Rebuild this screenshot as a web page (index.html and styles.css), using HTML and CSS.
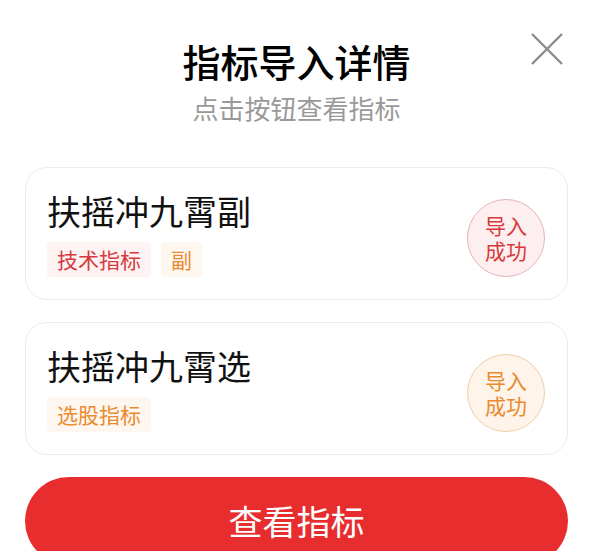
FILE: index.html
```html
<!DOCTYPE html>
<html>

<head>
    <title>指标导入详情</title>
    <link rel="stylesheet" href="styles.css">
</head>

<body>
    <div class="sheet">
        <div class="header">
            <h1 class="title">指标导入详情</h1>
            <p class="subtitle">点击按钮查看指标</p>
            <button class="close" aria-label="关闭">
                <svg width="32" height="32" viewBox="0 0 32 32">
                    <path d="M1 1 L31 31 M31 1 L1 31" stroke="#8c8c8c" stroke-width="2.4" fill="none" />
                </svg>
            </button>
        </div>

        <ul class="list">
            <li class="card">
                <div class="info">
                    <div class="name">扶摇冲九霄副</div>
                    <div class="tags">
                        <span class="tag tag-red">技术指标</span>
                        <span class="tag tag-orange">副</span>
                    </div>
                </div>
                <div class="status status-red">
                    <span>导入</span>
                    <span>成功</span>
                </div>
            </li>
            <li class="card">
                <div class="info">
                    <div class="name">扶摇冲九霄选</div>
                    <div class="tags">
                        <span class="tag tag-orange">选股指标</span>
                    </div>
                </div>
                <div class="status status-orange">
                    <span>导入</span>
                    <span>成功</span>
                </div>
            </li>
        </ul>

        <button class="view">查看指标</button>
    </div>
</body>

</html>
```

FILE: styles.css
```css
body {
    margin: 0;
    background-color: #fff;
    font-family: 'Noto Sans CJK SC', 'Noto Sans', sans-serif;
    color: #111;
}

.sheet {
    padding: 0 30px 0 25px;
}

.header {
    position: relative;
    text-align: center;
    padding-top: 38px;
}

.title {
    margin: 0;
    font-size: 38px;
    font-weight: 500;
    line-height: 46px;
    color: #000;
}

.subtitle {
    margin: 7px 0 0;
    font-size: 26px;
    line-height: 34px;
    color: #999;
}

.close {
    position: absolute;
    top: 33px;
    right: 5px;
    padding: 0;
    border: none;
    background: none;
    width: 32px;
    height: 32px;
}

.list {
    list-style: none;
    margin: 42px 0 0;
    padding: 0;
}

.card {
    display: flex;
    align-items: flex-start;
    justify-content: space-between;
    border: 1px solid #ececec;
    border-radius: 22px;
    padding: 21px 22px 22px 21px;
    margin-bottom: 22px;
}

.name {
    font-size: 34px;
    line-height: 44px;
    color: #111;
}

.tags {
    display: flex;
    gap: 10px;
    margin-top: 9px;
}

.tag {
    font-size: 21px;
    line-height: 35px;
    padding: 0 10px;
    border-radius: 4px;
}

.tag-red {
    background-color: #fdf3f3;
    color: #d63a3d;
}

.tag-orange {
    background-color: #fef7ef;
    color: #ea8a2e;
}

.status {
    width: 76px;
    height: 76px;
    border-radius: 50%;
    margin-top: 10px;
    display: flex;
    flex-direction: column;
    align-items: center;
    justify-content: center;
    font-size: 21px;
    line-height: 25px;
}

.status-red {
    background-color: #fdeeef;
    border: 1px solid #e6b3b8;
    color: #d63a3d;
}

.status-orange {
    background-color: #fef4e9;
    border: 1px solid #efcfa6;
    color: #ea8a2e;
}

.view {
    display: block;
    width: 100%;
    height: 88px;
    border: none;
    border-radius: 44px;
    background-color: #e82d2f;
    color: #fff;
    font-family: inherit;
    font-size: 34px;
    line-height: 44px;
    padding: 0;
}
```
